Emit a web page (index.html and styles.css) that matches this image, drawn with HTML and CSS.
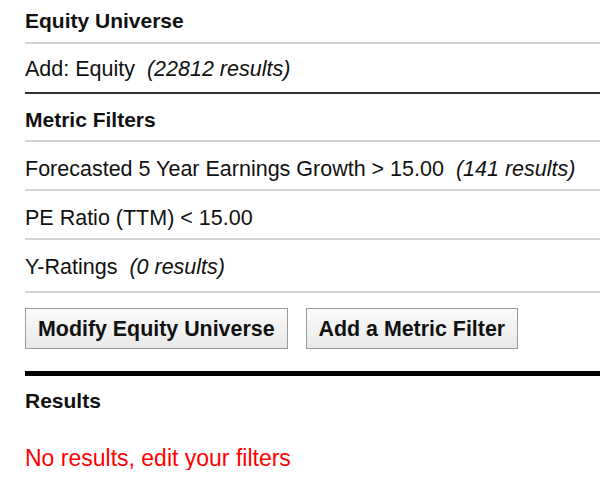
FILE: index.html
```html
<!DOCTYPE html>
<html lang="en">
<head>
  <meta charset="UTF-8" />
  <title>Screener Filters</title>
  <link rel="stylesheet" href="styles.css">
</head>
<body>
  <div class="screener">
    <div class="row heading first">Equity Universe</div>
    <div class="row dark">Add: Equity &nbsp;<em>(22812 results)</em></div>

    <div class="row heading">Metric Filters</div>
    <div class="row">Forecasted 5 Year Earnings Growth &gt; 15.00 &nbsp;<em>(141 results)</em></div>
    <div class="row">PE Ratio (TTM) &lt; 15.00</div>
    <div class="row last">Y-Ratings &nbsp;<em>(0 results)</em></div>

    <div class="actions">
      <button class="btn">Modify Equity Universe</button>
      <button class="btn">Add a Metric Filter</button>
    </div>

    <div class="results">
      <div class="results-title">Results</div>
      <p class="empty">No results, edit your filters</p>
    </div>
  </div>
</body>
</html>
```

FILE: styles.css
```css
body {
  margin: 0;
  background: #fff;
  color: #111;
  font-family: 'Liberation Sans', Arial, sans-serif;
  font-size: 21.5px;
  line-height: 24px;
}

.screener {
  margin-left: 25px;
  overflow: hidden;
}

.row {
  padding: 15px 0 8px 0;
  border-bottom: 2px solid #d4d4d4;
  white-space: nowrap;
}

.row em {
  font-style: italic;
}

.row.heading {
  font-size: 21px;
  font-weight: bold;
  padding-top: 14px;
}

.row.first {
  padding-top: 9px;
  padding-bottom: 9px;
}

.row.dark {
  padding-top: 13px;
  padding-bottom: 11px;
  border-bottom-color: #333;
}

.row.last {
  padding-bottom: 12px;
}

.actions {
  display: flex;
  gap: 18px;
  padding: 15px 0 22px 0;
}

.btn {
  font-family: 'Liberation Sans', Arial, sans-serif;
  font-size: 21.4px;
  font-weight: bold;
  line-height: 24px;
  color: #111;
  padding: 8px 12px 7px 12px;
  border: 1px solid #9a9a9a;
  background: linear-gradient(#fbfbfb, #e9e9e9);
  border-radius: 0;
  white-space: nowrap;
}

.results {
  border-top: 5px solid #000;
  padding-top: 13px;
}

.results-title {
  font-size: 21px;
  font-weight: bold;
}

.empty {
  margin: 33px 0 0 0;
  font-size: 23px;
  color: #ff0000;
}
```
